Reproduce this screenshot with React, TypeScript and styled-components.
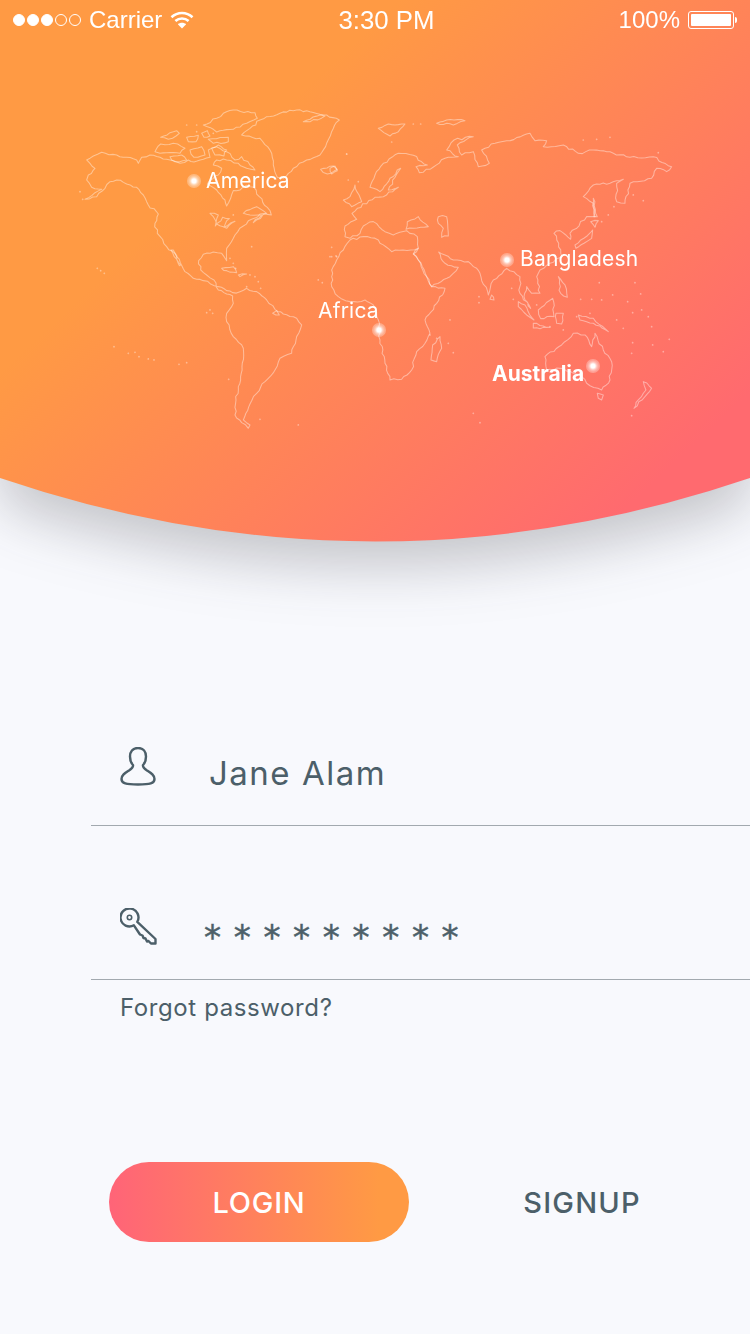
import React from 'react';
import styled, { createGlobalStyle } from 'styled-components';

const GlobalStyle = createGlobalStyle`
  html, body {
    margin: 0;
    padding: 0;
    background: #f8f9fd;
  }
`;

const slate = '#4c5f69';
const uiFont = `Inter, "Noto Sans", sans-serif`;

const Page = styled.div`
  width: 750px;
  height: 1334px;
  overflow: hidden;
  background: #f8f9fd;
  font-family: ${uiFont};
  color: ${slate};
`;

const HeroShadow = styled.div`
  height: 542px;
  filter: drop-shadow(0 24px 28px rgba(40, 40, 46, 0.25));
`;

const Hero = styled.header`
  position: relative;
  height: 542px;
  background: linear-gradient(137deg, #ff9a44 30%, #ff6a6f 88%);
  clip-path: path('M0 0H750V478Q375 605 0 478Z');
`;

const StatusBar = styled.div`
  position: relative;
  z-index: 2;
  display: flex;
  align-items: center;
  justify-content: space-between;
  height: 40px;
  padding: 0 14px 0 13px;
  color: #fff;
  font-family: 'Liberation Sans', Arial, sans-serif;
  font-size: 24px;
`;

const StatusGroup = styled.div`
  display: flex;
  align-items: center;
  gap: 8px;
  width: 230px;
  justify-content: ${(p: { $end?: boolean }) => (p.$end ? 'flex-end' : 'flex-start')};
`;

const Signal = styled.div`
  display: flex;
  gap: 2px;
`;

const SignalDot = styled.span<{ $on: boolean }>`
  width: 12px;
  height: 12px;
  box-sizing: border-box;
  border-radius: 50%;
  border: 1px solid #fff;
  background: ${(p) => (p.$on ? '#fff' : 'transparent')};
`;

const Clock = styled.div`
  font-size: 25.8px;
  margin-left: 24px;
`;

const Battery = styled.div`
  position: relative;
  width: 46px;
  height: 18px;
  box-sizing: border-box;
  padding: 2px;
  border: 1px solid #fff;
  border-radius: 3px;
  margin-right: 2px;

  &::before {
    content: '';
    display: block;
    height: 100%;
    border-radius: 1px;
    background: #fff;
  }

  &::after {
    content: '';
    position: absolute;
    right: -4px;
    top: 5px;
    width: 2px;
    height: 6px;
    border-radius: 0 2px 2px 0;
    background: #fff;
  }
`;

const MapLayer = styled.svg`
  position: absolute;
  left: 0;
  top: 0;
  fill: none;
  stroke: rgba(255, 255, 255, 0.42);
  stroke-width: 3.2;
  stroke-linejoin: round;
  stroke-linecap: round;
`;

const Marker = styled.span<{ $x: number; $y: number }>`
  position: absolute;
  left: ${(p) => p.$x - 7}px;
  top: ${(p) => p.$y - 7}px;
  width: 14px;
  height: 14px;
  border-radius: 50%;
  background: radial-gradient(circle, #fff 0 2px, rgba(255, 255, 255, 0.55) 4px, rgba(255, 255, 255, 0.3) 6px 100%);
`;

const Place = styled.span<{ $x: number; $y: number; $bold?: boolean }>`
  position: absolute;
  left: ${(p) => p.$x}px;
  top: ${(p) => p.$y - 14}px;
  line-height: 28px;
  color: #fff;
  font-size: 21px;
  letter-spacing: ${(p) => (p.$bold ? 0 : 0.2)}px;
  font-weight: ${(p) => (p.$bold ? 700 : 400)};
`;

const Form = styled.section`
  padding: 130px 0 0 91px;
`;

const Field = styled.div<{ $pad: number }>`
  display: flex;
  align-items: flex-end;
  box-sizing: border-box;
  height: 154px;
  padding: 0 0 ${(p) => p.$pad}px 29px;
  border-bottom: 1px solid #a2a9af;
`;

const FieldIcon = styled.svg<{ $lift?: number }>`
  flex: none;
  fill: none;
  stroke: ${slate};
  stroke-width: 2.4;
  stroke-linejoin: round;
  margin-bottom: ${(p) => p.$lift ?? 0}px;
`;

const NameValue = styled.div`
  margin-left: 53px;
  font-size: 33px;
  line-height: 40px;
  letter-spacing: 1.5px;
`;

const SecretValue = styled.div`
  margin-left: 46px;
  font-family: 'DejaVu Sans', sans-serif;
  font-size: 34px;
  line-height: 32px;
  letter-spacing: 12.7px;
  -webkit-text-stroke: 0.5px ${slate};
  transform: translateY(7px);
`;

const Forgot = styled.div`
  margin: 13px 0 0 29px;
  font-size: 24px;
  line-height: 30px;
  letter-spacing: 0.6px;
`;

const Actions = styled.div`
  display: flex;
  align-items: center;
  padding: 139px 0 0 109px;
`;

const LoginButton = styled.button`
  flex: none;
  width: 300px;
  height: 80px;
  border: 0;
  border-radius: 40px;
  background: linear-gradient(90deg, #ff6478 0%, #ff9a44 90%);
  color: #fff;
  font: 500 29px ${uiFont};
  letter-spacing: 0.7px;
`;

const SignupButton = styled.button`
  flex: none;
  width: 346px;
  border: 0;
  background: none;
  color: ${slate};
  font: 500 29px ${uiFont};
  letter-spacing: 1.2px;
`;

const lands = [
  // north america
  'M50 180L70 168L95 157L140 165L200 180L205 190L215 172L240 165L290 178L330 190L355 180L372 186L400 178L420 172L415 150L440 140L470 155L495 180L515 170L540 195L555 210L530 205L505 190L470 180L440 180L430 195L455 205L445 225L420 240L412 252L440 270L465 300L470 318L482 295L490 272L510 270L530 256L552 262L568 290L592 322L604 345L570 342L545 358L520 378L495 405L470 445L470 482L455 460L430 456L400 463L386 482L392 510L410 525L432 540L445 570L470 582L488 588L490 610L470 640L470 665L490 710L520 745L516 800L505 860L498 900L495 945L515 968L535 985L540 975L520 960L540 912L560 880L585 845L622 798L630 775L665 760L680 710L695 675L680 655L640 642L615 628L590 600L560 575L530 565L510 575L488 578L470 572L445 560L400 542L370 535L345 515L320 470L290 440L262 400L255 370L265 342L235 315L220 285L200 262L170 252L140 240L120 245L105 265L80 290L45 298L75 278L95 268L65 262L50 240L55 225L75 205L60 190Z',
  'M303 450L328 497L332 495L310 450Z',
  'M515 105L570 115L600 150L610 195L622 232L640 235L670 205L710 180L750 165L770 130L785 95L808 60L770 45L720 35L680 30L630 40L590 50L570 60L540 85Z',
  'M700 65L750 45L765 48L720 65Z',
  'M400 75L440 55L460 40L490 30L555 38L562 55L530 70L490 88L440 96Z',
  'M255 155L272 132L310 130L345 145L330 160L290 158L270 160Z',
  'M272 112L320 92L328 100L295 118Z',
  'M415 118L475 112L475 125L430 130Z',
  'M425 145L445 135L470 150L462 168L435 165Z',
  'M350 112L385 106L378 125L355 125Z',
  'M300 170L335 165L350 180L315 185Z',
  'M360 150L395 140L405 165L372 172Z',
  'M395 100L412 92L420 108L402 112Z',
  'M752 208L790 198L802 208L772 222Z',
  'M420 340L445 345L436 378L458 352L478 356L462 382L495 364L470 385L440 372L430 350Z',
  'M520 340L560 320L590 340L550 368L575 345L540 345Z',
  'M455 505L490 500L500 518L470 512Z',
  'M505 525L530 522L510 530Z',
  'M608 640L620 632L628 645Z',
];

const eastern = [
  // eurasia
  'M45 378L80 358L66 340L82 325L135 292L160 290L205 262L175 270L195 232L212 205L180 235L150 275L120 262L135 225L160 190L205 160L250 166L292 195L258 200L268 218L300 208L345 175L385 170L350 150L372 120L430 110L382 135L395 165L430 155L445 200L478 190L455 150L495 130L530 122L600 100L615 122L650 122L640 140L700 135L745 160L790 150L850 160L900 172L970 170L1025 200L1010 215L980 205L965 235L900 250L885 310L860 305L860 250L880 238L840 250L790 255L760 290L790 310L795 350L770 350L720 400L722 418L690 392L672 400L686 430L696 470L660 490L630 510L620 530L630 580L605 580L590 560L582 590L602 625L570 580L570 530L530 505L490 540L475 585L450 520L440 505L415 485L370 480L345 465L326 456L345 490L385 502L360 530L305 560L290 530L265 480L250 462L265 445L262 410L230 392L190 405L165 395L130 365L100 378L90 400L60 415L45 410Z',
  'M228 388L232 365L265 350L295 380L250 385Z',
  'M325 350L350 350L355 408L335 412L340 385L325 370Z',
  // africa
  'M60 420L40 450L20 480L5 510L5 560L25 590L60 605L105 600L130 615L145 660L150 720L165 790L180 840L215 838L245 810L260 755L285 730L300 700L285 660L320 610L345 565L305 560L290 530L265 480L250 462L265 445L185 455L150 430L145 420L100 410Z',
  'M330 710L335 745L320 785L303 780L308 735Z',
  // britain, ireland
  'M40 300L60 290L75 255L95 305L65 320Z',
  'M0 205L15 198L22 212L5 222Z',
  'M145 85L175 72L225 72L205 95L180 108Z',
  'M320 70L350 60L405 62L370 75Z',
  // asia islands
  'M485 585L492 600L480 598Z',
  'M565 605L585 615L612 660L590 645L565 620Z',
  'M625 630L668 595L672 650L632 656Z',
  'M610 670L660 682L610 684Z',
  'M678 640L700 640L695 672L680 670Z',
  'M685 530L705 555L712 592L692 580Z',
  'M735 435L788 390L785 415L762 430L738 445Z',
  'M782 365L805 362L795 382Z',
  'M790 295L802 350L792 350Z',
  'M745 645L790 655L835 695L790 670L750 660Z',
  // australia, new zealand
  'M645 770L695 735L730 700L765 705L785 740L795 700L820 750L845 785L840 840L815 870L770 850L755 830L700 805L650 810Z',
  'M802 880L820 885L815 900L805 895Z',
  'M940 845L965 865L945 890L912 925L925 900L948 870Z',
];

const westDots = [
  [30, 275], [38, 298], [82, 505], [92, 512], [103, 520], [410, 638], [420, 630], [428, 640], [132, 740],
  [175, 760], [195, 757], [207, 770], [235, 777], [252, 780], [327, 793], [350, 788], [476, 838], [570, 958],
  [685, 975], [785, 442], [780, 470], [798, 468], [745, 540], [757, 548], [545, 440], [490, 345], [350, 75],
  [380, 75], [480, 475], [490, 490], [497, 505], [540, 525], [555, 530], [565, 545], [572, 565], [530, 560],
  [830, 162], [865, 245], [835, 240], [380, 95], [430, 100],
];

const eastDots = [
  [250, 72], [272, 72], [185, 126], [50, 162], [5, 470], [20, 470], [447, 590], [447, 608], [545, 565],
  [550, 598], [620, 615], [808, 548], [915, 548], [932, 582], [752, 598], [785, 598], [815, 600], [848, 585],
  [893, 605], [908, 638], [935, 630], [955, 650], [965, 680], [1018, 718], [968, 735], [1000, 755], [908, 728],
  [905, 760], [360, 660], [355, 730], [370, 758], [430, 940], [450, 968], [905, 947], [910, 285], [940, 302],
  [852, 320], [835, 345], [815, 365], [860, 660], [880, 685], [760, 120], [800, 118], [840, 112], [985, 158],
  [780, 640], [740, 650], [700, 690], [660, 680], [300, 705], [320, 715],
];

// adds small wobble to the straight traced segments so coasts read as coasts
const roughen = (d: string) => {
  const pts = d
    .slice(1, -1)
    .split('L')
    .map((p) => p.split(' ').map(Number));
  let seed = pts.length * 7 + 3;
  const next = () => {
    seed = (seed * 9301 + 49297) % 233280;
    return seed / 233280 - 0.5;
  };
  const out: string[] = [];
  pts.forEach(([x, y], i) => {
    const [nx, ny] = pts[(i + 1) % pts.length];
    const len = Math.hypot(nx - x, ny - y);
    const steps = Math.max(1, Math.round(len / 11));
    for (let s = 0; s < steps; s++) {
      const t = s / steps;
      const k = s === 0 ? 0 : next() * 7;
      out.push(`${(x + (nx - x) * t + (-(ny - y) / len) * k).toFixed(1)} ${(y + (ny - y) * t + ((nx - x) / len) * k).toFixed(1)}`);
    }
  });
  return `M${out.join('L')}Z`;
};

const countryMarks = [
  { x: 194, y: 181 },
  { x: 379, y: 330 },
  { x: 507, y: 260 },
  { x: 593, y: 366 },
];

export default function App() {
  return (
    <Page>
      <GlobalStyle />
      <HeroShadow>
        <Hero>
          <MapLayer width="750" height="542" viewBox="0 0 750 542">
            <g transform="translate(70 100) scale(0.3333)">
              {lands.map((d, i) => (
                <path key={i} d={roughen(d)} />
              ))}
              {westDots.map(([x, y], i) => (
                <circle key={i} cx={x} cy={y} r="1" />
              ))}
            </g>
            <g transform="translate(330 100) scale(0.3333)">
              {eastern.map((d, i) => (
                <path key={i} d={roughen(d)} />
              ))}
              {eastDots.map(([x, y], i) => (
                <circle key={i} cx={x} cy={y} r="1" />
              ))}
            </g>
          </MapLayer>
          <StatusBar>
            <StatusGroup>
              <Signal>
                {[true, true, true, false, false].map((on, i) => (
                  <SignalDot key={i} $on={on} />
                ))}
              </Signal>
              <span>Carrier</span>
              <svg width="24" height="18" viewBox="0 0 24 18" fill="none" stroke="#fff" strokeWidth="2.6">
                <path d="M1.5 6.2C7.5 0.6 16.5 0.6 22.5 6.2" />
                <path d="M5.4 10C9.2 6.6 14.8 6.6 18.6 10" />
                <path d="M12 17.5L7.8 13.2C10.2 11.2 13.8 11.2 16.2 13.2Z" fill="#fff" stroke="none" />
              </svg>
            </StatusGroup>
            <Clock>3:30 PM</Clock>
            <StatusGroup $end>
              <span>100%</span>
              <Battery />
            </StatusGroup>
          </StatusBar>
          {countryMarks.map((m) => (
            <Marker key={m.x} $x={m.x} $y={m.y} />
          ))}
          <Place $x={206} $y={181}>America</Place>
          <Place $x={318} $y={311}>Africa</Place>
          <Place $x={520} $y={259}>Bangladesh</Place>
          <Place $x={492} $y={374} $bold>Australia</Place>
        </Hero>
      </HeroShadow>

      <Form>
        <Field $pad={32}>
          <FieldIcon width="36" height="40" viewBox="0 0 36 40" $lift={6}>
            <path d="M18 1C12.5 1 10 5 10 9.5C10 13 11 16 13 18C13.5 20 12 21.5 9 23.5C5 26 1.5 28 1.5 32C1.5 36.5 6 37.5 18 37.5C30 37.5 34.5 36.5 34.5 32C34.5 28 31 26 27 23.5C24 21.5 22.5 20 23 18C25 16 26 13 26 9.5C26 5 23.5 1 18 1Z" />
          </FieldIcon>
          <NameValue>Jane Alam</NameValue>
        </Field>
        <Field $pad={33}>
          <FieldIcon width="38" height="38" viewBox="0 0 38 38">
            <path d="M17.3 13.9L35.5 31V35.5H31L28.5 33L27 33.5L25.5 30.5L23.5 30L22.5 27.5L20 26.5L13.9 17.3A9 9 0 1 1 17.3 13.9Z" />
            <circle cx="9.5" cy="9.5" r="2.2" strokeWidth="1.6" />
          </FieldIcon>
          <SecretValue>*********</SecretValue>
        </Field>
        <Forgot>Forgot password?</Forgot>
      </Form>

      <Actions>
        <LoginButton>LOGIN</LoginButton>
        <SignupButton>SIGNUP</SignupButton>
      </Actions>
    </Page>
  );
}
